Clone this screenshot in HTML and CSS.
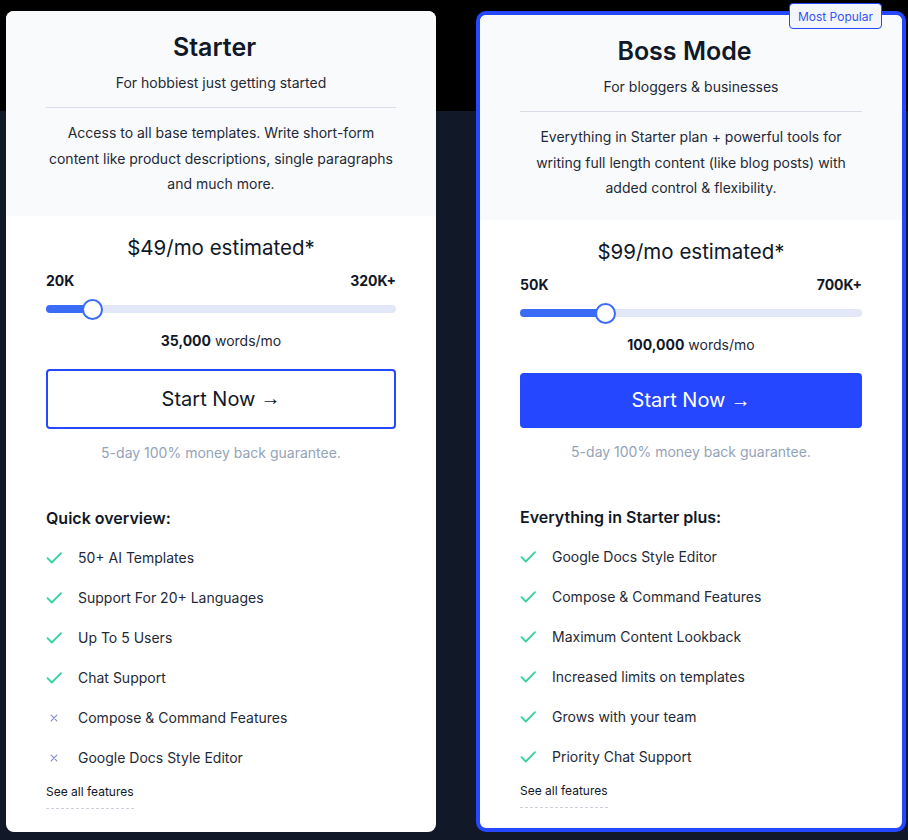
FILE: index.html
```html
<!DOCTYPE html>
<html lang="en">
<head>
<meta charset="utf-8">
<title>Pricing</title>
<link rel="stylesheet" href="styles.css">
</head>
<body>
<div class="plans">
  <section class="card">
    <div class="card-head">
      <h2 class="title">Starter</h2>
      <p class="subtitle">For hobbiest just getting started</p>
      <p class="desc">Access to all base templates. Write short-form content like product descriptions, single paragraphs and much more.</p>
    </div>
    <div class="card-body">
      <div class="price">$49/mo estimated*</div>
      <div class="range-labels"><span>20K</span><span>320K+</span></div>
      <div class="slider">
        <div class="track"><div class="fill" style="width:45.7px"></div></div>
        <div class="thumb" style="left:35.7px"></div>
      </div>
      <div class="words"><b>35,000</b> words/mo</div>
      <a class="btn btn-outline" href="#">Start Now <span class="arrow">→</span></a>
      <p class="guarantee">5-day 100% money back guarantee.</p>
      <h3 class="list-title">Quick overview:</h3>
      <ul class="features">
        <li><span class="ic"><svg viewBox="0 0 16 12" width="16" height="12"><path d="M1.5 6.2l4.3 4.3L15 1.2" fill="none" stroke="#34d399" stroke-width="1.8" stroke-linecap="round" stroke-linejoin="round"/></svg></span>50+ AI Templates</li>
        <li><span class="ic"><svg viewBox="0 0 16 12" width="16" height="12"><path d="M1.5 6.2l4.3 4.3L15 1.2" fill="none" stroke="#34d399" stroke-width="1.8" stroke-linecap="round" stroke-linejoin="round"/></svg></span>Support For 20+ Languages</li>
        <li><span class="ic"><svg viewBox="0 0 16 12" width="16" height="12"><path d="M1.5 6.2l4.3 4.3L15 1.2" fill="none" stroke="#34d399" stroke-width="1.8" stroke-linecap="round" stroke-linejoin="round"/></svg></span>Up To 5 Users</li>
        <li><span class="ic"><svg viewBox="0 0 16 12" width="16" height="12"><path d="M1.5 6.2l4.3 4.3L15 1.2" fill="none" stroke="#34d399" stroke-width="1.8" stroke-linecap="round" stroke-linejoin="round"/></svg></span>Chat Support</li>
        <li><span class="ic"><svg viewBox="0 0 16 12" width="16" height="12"><path d="M5.2 3.2l5.6 5.6M10.8 3.2l-5.6 5.6" fill="none" stroke="#7f8fc4" stroke-width="1.2" stroke-linecap="round"/></svg></span>Compose &amp; Command Features</li>
        <li><span class="ic"><svg viewBox="0 0 16 12" width="16" height="12"><path d="M5.2 3.2l5.6 5.6M10.8 3.2l-5.6 5.6" fill="none" stroke="#7f8fc4" stroke-width="1.2" stroke-linecap="round"/></svg></span>Google Docs Style Editor</li>
      </ul>
      <a class="see-all" href="#">See all features</a>
    </div>
  </section>

  <section class="card card-popular">
    <span class="badge">Most Popular</span>
    <div class="card-head">
      <h2 class="title">Boss Mode</h2>
      <p class="subtitle">For bloggers &amp; businesses</p>
      <p class="desc">Everything in Starter plan + powerful tools for writing full length content (like blog posts) with added control &amp; flexibility.</p>
    </div>
    <div class="card-body">
      <div class="price">$99/mo estimated*</div>
      <div class="range-labels"><span>50K</span><span>700K+</span></div>
      <div class="slider">
        <div class="track"><div class="fill" style="width:85px"></div></div>
        <div class="thumb" style="left:75px"></div>
      </div>
      <div class="words"><b>100,000</b> words/mo</div>
      <a class="btn btn-solid" href="#">Start Now <span class="arrow">→</span></a>
      <p class="guarantee">5-day 100% money back guarantee.</p>
      <h3 class="list-title">Everything in Starter plus:</h3>
      <ul class="features">
        <li><span class="ic"><svg viewBox="0 0 16 12" width="16" height="12"><path d="M1.5 6.2l4.3 4.3L15 1.2" fill="none" stroke="#34d399" stroke-width="1.8" stroke-linecap="round" stroke-linejoin="round"/></svg></span>Google Docs Style Editor</li>
        <li><span class="ic"><svg viewBox="0 0 16 12" width="16" height="12"><path d="M1.5 6.2l4.3 4.3L15 1.2" fill="none" stroke="#34d399" stroke-width="1.8" stroke-linecap="round" stroke-linejoin="round"/></svg></span>Compose &amp; Command Features</li>
        <li><span class="ic"><svg viewBox="0 0 16 12" width="16" height="12"><path d="M1.5 6.2l4.3 4.3L15 1.2" fill="none" stroke="#34d399" stroke-width="1.8" stroke-linecap="round" stroke-linejoin="round"/></svg></span>Maximum Content Lookback</li>
        <li><span class="ic"><svg viewBox="0 0 16 12" width="16" height="12"><path d="M1.5 6.2l4.3 4.3L15 1.2" fill="none" stroke="#34d399" stroke-width="1.8" stroke-linecap="round" stroke-linejoin="round"/></svg></span>Increased limits on templates</li>
        <li><span class="ic"><svg viewBox="0 0 16 12" width="16" height="12"><path d="M1.5 6.2l4.3 4.3L15 1.2" fill="none" stroke="#34d399" stroke-width="1.8" stroke-linecap="round" stroke-linejoin="round"/></svg></span>Grows with your team</li>
        <li><span class="ic"><svg viewBox="0 0 16 12" width="16" height="12"><path d="M1.5 6.2l4.3 4.3L15 1.2" fill="none" stroke="#34d399" stroke-width="1.8" stroke-linecap="round" stroke-linejoin="round"/></svg></span>Priority Chat Support</li>
      </ul>
      <a class="see-all" href="#">See all features</a>
    </div>
  </section>
</div>
</body>
</html>
```

FILE: styles.css
```css
* { box-sizing: border-box; }
html, body { margin: 0; }
body {
  font-family: Inter, "Noto Sans", sans-serif;
  color: #1f2937;
  background: linear-gradient(#000 0, #000 111px, #111827 111px) no-repeat;
  background-color: #111827;
  min-height: 840px;
}
.plans {
  display: grid;
  grid-template-columns: 430px 430px;
  column-gap: 40px;
  padding: 11px 2px 8px 6px;
  align-items: stretch;
}
.card {
  position: relative;
  background: #fff;
  border-radius: 8px;
  display: flex;
  flex-direction: column;
}
.card-popular {
  border: 4px solid #2447ff;
  border-radius: 10px;
}
.card-head {
  background: #f8fafc;
  padding: 20px 40px 19px;
  text-align: center;
  border-radius: 8px 8px 0 0;
}
.card-popular .card-head { border-radius: 6px 6px 0 0; }
.title {
  margin: 0;
  font-size: 25px;
  line-height: 32px;
  font-weight: 600;
  color: #111827;
  padding-right: 13px;
}
.subtitle {
  margin: 10px 0 0;
  font-size: 14px;
  line-height: 20px;
  color: #1f2937;
  padding-bottom: 14px;
  border-bottom: 1px solid #d9dee6;
}
.desc {
  margin: 12px 0 0;
  font-size: 14px;
  line-height: 25.5px;
  color: #1f2937;
}
.card-body {
  padding: 18px 40px 23px;
  display: flex;
  flex-direction: column;
}
.card-popular .card-body { padding-bottom: 20px; }
.price {
  text-align: center;
  font-size: 20.5px;
  line-height: 28px;
  font-weight: 400;
  color: #111827;
}
.range-labels {
  margin-top: 9px;
  display: flex;
  justify-content: space-between;
  font-size: 14px;
  line-height: 20px;
  font-weight: 700;
  color: #111827;
}
.slider {
  position: relative;
  margin-top: 8px;
  height: 20px;
}
.track {
  position: absolute;
  left: 0;
  right: 0;
  top: 6px;
  height: 8px;
  border-radius: 4px;
  background: #e2e8f7;
  overflow: hidden;
}
.fill {
  height: 100%;
  background: #3b6cf6;
}
.thumb {
  position: absolute;
  top: 0;
  width: 21px;
  height: 21px;
  border-radius: 50%;
  background: #fff;
  border: 2px solid #3b6cf6;
}
.words {
  margin-top: 12px;
  text-align: center;
  font-size: 14px;
  line-height: 20px;
  color: #1f2937;
}
.words b { font-weight: 700; color: #111827; }
.btn {
  display: flex;
  align-items: center;
  justify-content: center;
  margin-top: 18px;
  border-radius: 4px;
  font-size: 20px;
  font-weight: 400;
  text-decoration: none;
}
.arrow {
  font-family: "Liberation Sans", "DejaVu Sans", sans-serif;
  font-size: 20px;
  margin-left: 5px;
}
.btn-outline {
  height: 60px;
  border: 2px solid #2447ff;
  background: #fff;
  color: #111827;
}
.btn-solid {
  height: 55px;
  background: #2447ff;
  color: #fff;
}
.guarantee {
  margin: 14px 0 0;
  text-align: center;
  font-size: 14px;
  line-height: 20px;
  color: #94a3b8;
}
.list-title {
  margin: 43px 0 0;
  font-size: 16px;
  line-height: 24px;
  font-weight: 600;
  color: #111827;
}
.features {
  list-style: none;
  margin: 18px 0 0;
  padding: 0;
  display: flex;
  flex-direction: column;
  gap: 20px;
}
.features li {
  display: flex;
  align-items: center;
  font-size: 14px;
  line-height: 20px;
  color: #1f2937;
}
.ic {
  width: 16px;
  height: 12px;
  margin-right: 16px;
  display: inline-flex;
  flex: none;
}
.see-all {
  align-self: flex-start;
  margin-top: 16px;
  font-size: 12px;
  line-height: 16px;
  color: #111827;
  text-decoration: none;
  padding-bottom: 8px;
  border-bottom: 1px dashed #cbd2dc;
}
.badge {
  position: absolute;
  top: -12px;
  right: 20px;
  height: 26px;
  padding: 0 8px;
  display: flex;
  align-items: center;
  font-size: 12px;
  color: #3654f4;
  background: #f3f6fe;
  border: 1px solid #2447ff;
  border-radius: 4px;
}
```
